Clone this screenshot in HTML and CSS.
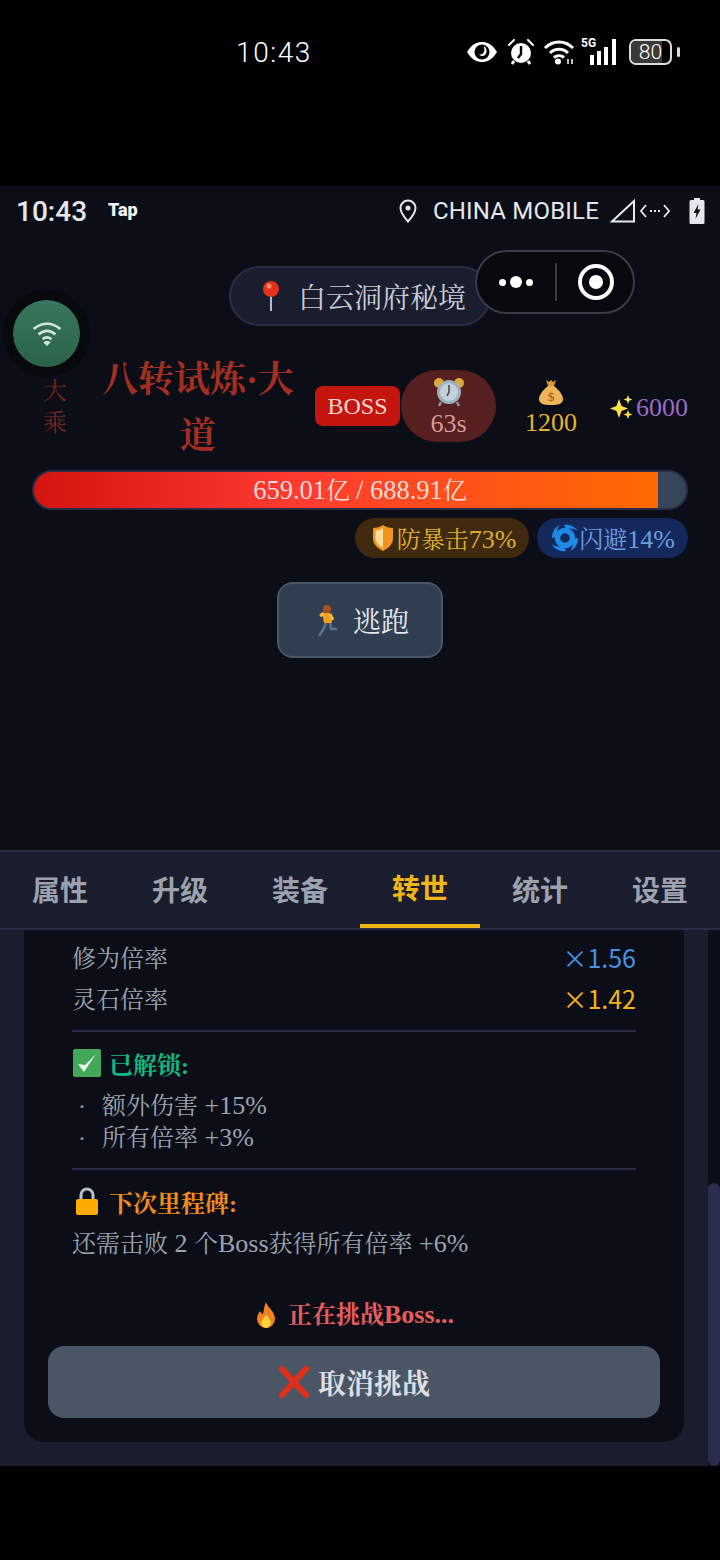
FILE: index.html
```html
<!DOCTYPE html>
<html lang="zh-CN">
<head>
  <meta charset="UTF-8" />
  <meta name="viewport" content="width=device-width, initial-scale=1.0"/>
  <title>白云洞府秘境</title>
  <link rel="stylesheet" href="styles.css">
</head>
<body>
  <!-- outer phone status bar -->
  <div class="phone-bar">
    <span class="phone-time">10:43</span>
    <div class="phone-icons">
      <svg width="32" height="24" viewBox="0 0 32 24"><path d="M1 12C6 4 11 2 16 2s10 2 15 10c-5 8-10 10-15 10S6 20 1 12z" fill="#fff"/><circle cx="16" cy="12" r="7.5" fill="#000"/><path d="M18 6a6 6 0 0 1 1 9c-2 2-5 1-6-1 2 1 4 0 5-2s0-4 0-6z" fill="#fff"/></svg>
      <svg class="ic-alarm" width="28" height="26" viewBox="0 0 28 26"><path d="M2 6l5-5M26 6l-5-5" stroke="#fff" stroke-width="2" stroke-linecap="round"/><circle cx="14" cy="14" r="10" fill="#fff"/><path d="M14 7v8l-3 4" stroke="#000" stroke-width="2.4" fill="none"/><path d="M7 22l-2 3M21 22l2 3" stroke="#fff" stroke-width="3"/></svg>
      <svg class="ic-wifi" width="32" height="26" viewBox="0 0 32 26"><path d="M2 9c8-8 20-8 28 0M7 14c5-5 13-5 18 0M11 18.500c3-2.500 7-2.500 10 0" stroke="#fff" stroke-width="3" fill="none"/><circle cx="15" cy="22.500" r="3" fill="#fff"/><path d="M25 20v5M29 20v5" stroke="#fff" stroke-width="1.500"/></svg>
      <div class="signal">
        <span class="five-g">5G</span>
        <svg width="40" height="26" viewBox="0 0 40 26"><path d="M11 16v10M18 12v14M25 8v18M33 0v26" stroke="#fff" stroke-width="4"/></svg>
      </div>
      <div class="battery"><span class="battery-fill"></span><span class="battery-num">80</span></div>
      <span class="battery-cap"></span>
    </div>
  </div>

  <div class="app">
    <div class="status-bar">
      <span class="status-time">10:43</span>
      <span class="status-tap">Tap</span>
      <div class="status-right">
        <svg width="18" height="24" viewBox="0 0 18 24"><path d="M9 1.500a7.500 7.500 0 0 0-7.500 7.500c0 5 7.500 13.500 7.500 13.500S16.500 14 16.500 9A7.500 7.500 0 0 0 9 1.500z" fill="none" stroke="#e5e7eb" stroke-width="2"/><circle cx="9" cy="9" r="2.500" fill="#e5e7eb"/></svg>
        <span class="carrier">CHINA MOBILE</span>
        <svg class="ic-triangle" width="26" height="24" viewBox="0 0 26 24"><path d="M2 22.500L24 2v20.500z" fill="none" stroke="#e5e7eb" stroke-width="2"/></svg>
        <svg class="ic-data" width="30" height="16" viewBox="0 0 30 16"><path d="M6 2L1 8l5 6M24 2l5 6-5 6" fill="none" stroke="#e5e7eb" stroke-width="1.800"/><path d="M10 8h2M14 8h2M18 8h2" stroke="#e5e7eb" stroke-width="2"/></svg>
        <svg class="ic-battery" width="16" height="26" viewBox="0 0 16 26"><path d="M5 0h6v2h3a1.500 1.500 0 0 1 1.500 1.500v21A1.500 1.500 0 0 1 14 26H2a1.500 1.500 0 0 1-1.500-1.500v-21A1.500 1.500 0 0 1 2 2h3z" fill="#e5e7eb"/><path d="M9.500 6L4.500 15h3l-1 6 5-9.500h-3z" fill="#0b0e17"/></svg>
      </div>
    </div>

    <div class="capsule">
      <div class="capsule-dots"><i></i><b></b><i></i></div>
      <span class="capsule-line"></span>
      <span class="capsule-target"><i></i></span>
    </div>

    <div class="float-wifi">
      <svg width="32" height="27" viewBox="0 0 36 30"><path d="M3 10c9-8 21-8 30 0M8.500 16c6-5 13-5 19 0M13 21.500c3-2.500 7-2.500 10 0" fill="none" stroke="#d3e6dc" stroke-width="3"/><path d="M18 29l-4-4c2-2 6-2 8 0z" fill="#d3e6dc"/></svg>
    </div>

    <main class="battle">
      <div class="location">
        <svg width="20" height="32" viewBox="0 0 20 32"><rect x="9" y="12" width="2" height="19" fill="#b8bcc4"/><circle cx="10" cy="9" r="8" fill="#e5331b"/><circle cx="8" cy="6" r="2.500" fill="#ff8a6a"/></svg>
        <span>白云洞府秘境</span>
      </div>

      <div class="boss-row">
        <div class="realm">大乘</div>
        <div class="boss-name">八转试炼·大道</div>
        <span class="boss-tag">BOSS</span>
        <div class="timer">
          <svg width="32" height="30" viewBox="0 0 32 30"><circle cx="6" cy="6" r="5" fill="#e0a83c"/><circle cx="26" cy="6" r="5" fill="#e0a83c"/><path d="M8 25l-2 4M24 25l2 4" stroke="#8b98a5" stroke-width="2.500"/><circle cx="16" cy="15" r="12" fill="#9fb0bd"/><circle cx="16" cy="15" r="9" fill="#c5d0d8"/><path d="M16 8v7l-2 4" stroke="#39424d" stroke-width="1.500" fill="none"/></svg>
          <span>63s</span>
        </div>
        <div class="gold">
          <svg width="26" height="28" viewBox="0 0 26 28"><path d="M8 2l3 2 2-2 2 2 3-2-2 6H10z" fill="#d99a3c"/><path d="M10 8h6c5 4 9 9 9 13 0 5-5 6-12 6S1 26 1 21c0-4 4-9 9-13z" fill="#efb45c"/><text x="13" y="23" class="bag-mark">$</text></svg>
          <span>1200</span>
        </div>
        <div class="spirit">
          <svg width="24" height="26" viewBox="0 0 24 26"><path d="M9 4l2.500 7L18 13.500 11.500 16 9 23l-2.500-7L0 13.500 6.500 11z" fill="#fbe04a"/><path d="M18 0l1.200 3.300L22.500 4.500l-3.300 1.200L18 9l-1.200-3.300L13.500 4.500l3.300-1.200z" fill="#f6dc6c"/><path d="M18 15l1.300 3.200L22.500 19.500l-3.200 1.300L18 24l-1.300-3.200-3.200-1.300 3.200-1.300z" fill="#f8d93c"/></svg>
          <span>6000</span>
        </div>
      </div>

      <div class="hp-bar">
        <div class="hp-fill" style="width: 95.7%"></div>
        <span class="hp-text"><span class="num">659.01</span>亿 <span class="num">/ 688.91</span>亿</span>
      </div>

      <div class="chips">
        <span class="chip chip-crit">
          <svg width="28" height="28" viewBox="-3 0 28 28"><path d="M11 1c3 2 6 3 10 3v10c0 6-4 10-10 13C5 24 1 20 1 14V4c4 0 7-1 10-3z" fill="#f2951f"/><path d="M11 4C9 5.500 6 6.500 3.500 6.500V14c0 4.500 3 7.500 7.500 10z" fill="#fbdc9a"/></svg>
          <span class="chip-text">防暴击<span class="num">73%</span></span>
        </span>
        <span class="chip chip-dodge">
          <svg width="28" height="28" viewBox="0 0 28 28"><circle cx="14" cy="14" r="7.500" fill="none" stroke="#1f8ae6" stroke-width="5.500"/><path d="M13 1c6-1 11 2 14 6-4-3-8-3-12-2zM27 14c0 6-3 11-8 13 3-3 3-8 2-11zM15 27C9 28 3 25 1 20c4 3 8 3 12 2zM1 14C1 8 4 3 9 1 6 4 6 8 7 12z" fill="#1f8ae6"/></svg>
          <span class="chip-text">闪避<span class="num">14%</span></span>
        </span>
      </div>

      <button class="flee-btn">
        <svg width="26" height="34" viewBox="0 0 26 34"><circle cx="14" cy="6" r="4" fill="#a8521c"/><path d="M9 10h8l2 10h-8z" fill="#f7a01c"/><path d="M7 13l4-3M17 11l3 6" stroke="#f9b93c" stroke-width="3"/><path d="M13 20l-3 7-4 6M17 20l1 6h6" stroke="#5c7290" stroke-width="2.500" fill="none"/></svg>
        <span>逃跑</span>
      </button>
    </main>

    <nav class="tabs">
      <div class="tab">属性</div>
      <div class="tab">升级</div>
      <div class="tab">装备</div>
      <div class="tab active">转世</div>
      <div class="tab">统计</div>
      <div class="tab">设置</div>
    </nav>

    <section class="panel">
      <div class="card">
        <div class="stats">
          <div class="rate-row"><span>修为倍率</span><b class="rate-blue">×1.56</b></div>
          <div class="rate-row"><span>灵石倍率</span><b class="rate-gold">×1.42</b></div>
        </div>

        <div class="block">
          <div class="block-title title-green">
            <svg width="28" height="28" viewBox="0 0 28 28"><rect width="28" height="28" rx="2" fill="#43a85a"/><path d="M5 15l6 8L23 5 12 16z" fill="#eef6ee"/></svg>
            已解锁:
          </div>
          <div class="perk"><span class="dot">·</span>额外伤害<span class="num"> +15%</span></div>
          <div class="perk"><span class="dot">·</span>所有倍率<span class="num"> +3%</span></div>
        </div>

        <div class="block block-next">
          <div class="block-title title-orange">
            <svg width="24" height="28" viewBox="0 0 24 28"><path d="M6 13V8a6 6 0 0 1 12 0v5" fill="none" stroke="#b9bec6" stroke-width="3"/><rect x="1" y="12" width="22" height="16" rx="2" fill="#ffaa00"/></svg>
            下次里程碑:
          </div>
          <div class="next-text">还需击败<span class="num"> 2 </span>个<span class="num">Boss</span>获得所有倍率<span class="num"> +6%</span></div>
        </div>

        <div class="fight-state">
          <svg width="24" height="28" viewBox="0 0 24 28"><path d="M12 1c1 5 9 9 9 17a9 9 0 0 1-18 0c0-4 2-6 3-8 1 2 2 3 3 3 1-4 1-8 3-12z" fill="#f4811f"/><path d="M12 13c1 3 5 5 5 9a5 5 0 0 1-10 0c0-3 4-5 5-9z" fill="#ffd23c"/></svg>
          <span class="fight-text">正在挑战<span class="num">Boss...</span></span>
        </div>

        <button class="cancel-btn">
          <svg width="32" height="32" viewBox="0 0 32 32"><path d="M4 3l24 26M28 3L4 29" stroke="#e0301a" stroke-width="6" stroke-linecap="round"/></svg>
          <span>取消挑战</span>
        </button>
      </div>
      <span class="scroll-track"><i class="scroll-thumb"></i></span>
    </section>
  </div>
</body>
</html>
```

FILE: styles.css
```css
* {
  box-sizing: border-box;
}

body {
  margin: 0;
  width: 720px;
  height: 1560px;
  background: #000;
  font-family: "Liberation Serif", "Noto Serif CJK SC", serif;
  color: #9ca3af;
  overflow: hidden;
}

svg {
  display: block;
  flex: none;
}

button {
  font-family: inherit;
}

/* latin text runs a little larger than the CJK next to it */
.num {
  font-size: 26px;
}

/* outer phone bar */
.phone-bar {
  height: 186px;
  padding: 38px 40px 0 236px;
  display: flex;
  justify-content: space-between;
  align-items: flex-start;
}

.phone-time {
  font-family: Roboto, sans-serif;
  font-weight: 300;
  font-size: 28px;
  line-height: 30px;
  letter-spacing: 1.600px;
  color: #fff;
}

.phone-icons {
  display: flex;
  align-items: center;
  height: 28px;
}

.ic-alarm {
  margin-left: 9px;
}

.ic-wifi {
  margin-left: 8px;
}

.signal {
  position: relative;
  width: 40px;
  height: 26px;
  margin-left: 6px;
}

.five-g {
  position: absolute;
  left: 0;
  top: -3px;
  font-family: Roboto, sans-serif;
  font-size: 12px;
  font-weight: 700;
  color: #fff;
}

.battery {
  position: relative;
  width: 43px;
  height: 26px;
  margin-left: 8px;
  border: 2px solid #ddd;
  border-radius: 7px;
  overflow: hidden;
}

.battery-fill {
  display: block;
  width: 80%;
  height: 100%;
  background: #3a3a3a;
}

.battery-num {
  position: absolute;
  inset: 0;
  text-align: center;
  font-family: Roboto, sans-serif;
  font-weight: 300;
  font-size: 21px;
  line-height: 22px;
  color: #fff;
}

.battery-cap {
  width: 3px;
  height: 10px;
  margin-left: 5px;
  background: #ddd;
  border-radius: 2px;
}

/* app */
.app {
  position: relative;
  height: 1280px;
  background: #0b0e17;
  display: flex;
  flex-direction: column;
}

.status-bar {
  flex: none;
  height: 50px;
  padding: 0 15px 0 16px;
  display: flex;
  align-items: center;
  font-family: Roboto, sans-serif;
  color: #e5e7eb;
}

.status-time {
  font-size: 28px;
  font-weight: 500;
}

.status-tap {
  margin-left: 21px;
  margin-top: -4px;
  font-size: 18px;
  font-weight: 900;
  color: #f2f2f2;
}

.status-right {
  margin-left: auto;
  display: flex;
  align-items: center;
}

.carrier {
  margin-left: 16px;
  font-size: 24px;
  letter-spacing: 0.200px;
}

.ic-triangle {
  margin-left: 11px;
}

.ic-data {
  margin-left: 4px;
}

.ic-battery {
  margin-left: 19px;
}

.capsule {
  position: absolute;
  left: 475px;
  top: 64px;
  width: 160px;
  height: 64px;
  background: #08090f;
  border: 2px solid #3a3c47;
  border-radius: 32px;
  display: flex;
  align-items: center;
  z-index: 2;
}

.capsule-dots {
  width: 78px;
  display: flex;
  justify-content: center;
  align-items: center;
  gap: 4px;
}

.capsule-dots i {
  width: 7px;
  height: 7px;
  border-radius: 50%;
  background: #fff;
}

.capsule-dots b {
  width: 12px;
  height: 12px;
  border-radius: 50%;
  background: #fff;
}

.capsule-line {
  width: 2px;
  height: 38px;
  background: #3a3c47;
}

.capsule-target {
  margin-left: 21px;
  width: 36px;
  height: 36px;
  border: 4px solid #fff;
  border-radius: 50%;
  display: flex;
  align-items: center;
  justify-content: center;
}

.capsule-target i {
  width: 14px;
  height: 14px;
  border-radius: 50%;
  background: #fff;
}

.float-wifi {
  position: absolute;
  left: 3px;
  top: 104px;
  width: 87px;
  height: 87px;
  background: #2f6f55;
  background-image: linear-gradient(#38775c, #2a6249);
  background-clip: padding-box;
  border: 10px solid #07090e;
  border-radius: 50%;
  display: flex;
  align-items: center;
  justify-content: center;
  z-index: 2;
}

.battle {
  flex: none;
  height: 614px;
  padding: 30px 32px 0;
  display: flex;
  flex-direction: column;
  align-items: center;
}

.location {
  flex: none;
  width: 262px;
  height: 60px;
  background: #1a1d2e;
  border: 2px solid #2a2d45;
  border-radius: 30px;
  display: flex;
  align-items: center;
  gap: 17px;
  padding-left: 30px;
  font-size: 28px;
  color: #c9ccd4;
  white-space: nowrap;
}

.boss-row {
  flex: none;
  align-self: stretch;
  height: 144px;
  padding-top: 16px;
  display: flex;
  align-items: center;
}

.realm {
  width: 24px;
  margin-left: 11px;
  margin-top: 2px;
  font-size: 24px;
  line-height: 32px;
  color: #722520;
}

.boss-name {
  width: 192px;
  margin-left: 35px;
  margin-top: 4px;
  font-size: 36px;
  line-height: 56px;
  font-weight: 700;
  text-align: center;
  color: #a32e22;
}

.boss-tag {
  margin-left: 21px;
  width: 85px;
  height: 40px;
  line-height: 40px;
  text-align: center;
  background: #c5150f;
  border-radius: 8px;
  font-size: 24px;
  color: #f3d6d2;
}

.timer {
  margin-left: 1px;
  width: 95px;
  height: 72px;
  border-radius: 36px;
  background: #55201f;
  display: flex;
  flex-direction: column;
  align-items: center;
  gap: 2px;
  padding-top: 7px;
  font-size: 26px;
  line-height: 30px;
  color: #d69a9a;
}

.gold {
  width: 110px;
  margin-top: 3px;
  display: flex;
  flex-direction: column;
  align-items: center;
  gap: 2px;
  font-size: 26px;
  line-height: 30px;
  color: #e6b32a;
}

.bag-mark {
  font-size: 13px;
  fill: #8a5a1c;
  text-anchor: middle;
}

.spirit {
  margin-left: 4px;
  margin-top: 3px;
  display: flex;
  align-items: center;
  gap: 2px;
  font-size: 26px;
  color: #9a6cc6;
}

.hp-bar {
  flex: none;
  position: relative;
  align-self: stretch;
  height: 40px;
  background: #374559;
  border: 2px solid #2a2d45;
  border-radius: 20px;
  overflow: hidden;
}

.hp-fill {
  height: 100%;
  background: linear-gradient(90deg, #d4140f 0%, #ff3b30 42%, #ff6a00 100%);
}

.hp-text {
  position: absolute;
  inset: 0;
  text-align: center;
  font-size: 24px;
  line-height: 37px;
  color: #f3dcd8;
  white-space: nowrap;
}

.hp-text .num {
  font-size: 26.500px;
}

.chips {
  flex: none;
  align-self: stretch;
  margin-top: 8px;
  display: flex;
  justify-content: flex-end;
  gap: 8px;
}

.chip {
  height: 40px;
  padding: 0 13px 0 14px;
  border-radius: 20px;
  display: flex;
  align-items: center;
  font-size: 24px;
  line-height: 30px;
  white-space: nowrap;
}

.chip-text {
  margin-top: 4px;
}

.chip-crit {
  background: #3f2a10;
  color: #dcae2e;
}

.chip-dodge {
  background: #14285c;
  color: #6d9ee0;
}

.flee-btn {
  flex: none;
  margin-top: 24px;
  width: 166px;
  height: 76px;
  background: #2f3e50;
  border: 2px solid #4a5568;
  border-radius: 16px;
  padding: 0 0 0 2px;
  display: flex;
  align-items: center;
  justify-content: center;
  gap: 14px;
  font-size: 28px;
  color: #e5e7eb;
}

.tabs {
  flex: none;
  height: 80px;
  background: #1a1d2e;
  border-top: 2px solid #2a2d45;
  border-bottom: 2px solid #2a2d45;
  display: flex;
}

.tab {
  width: 120px;
  height: 76px;
  text-align: center;
  font-size: 28px;
  font-weight: 700;
  line-height: 74px;
  color: #9ca3af;
  font-family: "Noto Sans CJK SC", sans-serif;
}

.tab.active {
  color: #f2b516;
  line-height: 70px;
  border-bottom: 4px solid #f2b516;
}

.panel {
  position: relative;
  flex: none;
  height: 536px;
  background: #1a1d2e;
  padding: 0 36px 24px 24px;
}

.card {
  height: 100%;
  background: #0b0e17;
  border-radius: 0 0 20px 20px;
  padding: 6px 48px 24px 48px;
  display: flex;
  flex-direction: column;
  font-size: 24px;
}

.stats {
  padding-bottom: 12px;
  border-bottom: 2px solid #2a2d45;
}

.rate-row {
  height: 41px;
  display: flex;
  justify-content: space-between;
  align-items: center;
  color: #9ca3af;
}

.rate-row b {
  font-family: "Noto Sans CJK SC", sans-serif;
  font-size: 25px;
  font-weight: 400;
}

.rate-blue {
  color: #4a90e2;
}

.rate-gold {
  color: #f2b516;
}

.block {
  padding: 11px 0 14px;
  border-bottom: 2px solid #2a2d45;
}

.block-next {
  padding-top: 11px;
  border-bottom: 0;
}

.block-title {
  height: 40px;
  display: flex;
  align-items: center;
  font-weight: 700;
}

.title-green {
  color: #10b981;
  gap: 8px;
  padding-left: 1px;
}

.title-orange {
  color: #f28c18;
  gap: 10px;
  padding-left: 3px;
}

.perk {
  height: 32px;
  line-height: 32px;
  color: #9ca3af;
}

.block .block-title + .perk {
  margin-top: 7px;
}

.dot {
  display: inline-block;
  width: 30px;
  padding-left: 6px;
}

.next-text {
  margin-top: 3px;
  height: 40px;
  line-height: 40px;
  color: #9ca3af;
  white-space: nowrap;
}

.fight-state {
  margin-top: 23px;
  height: 28px;
  display: flex;
  justify-content: center;
  align-items: center;
  gap: 10px;
  color: #e35d5d;
  font-weight: 700;
}

.fight-text {
  line-height: 24px;
}

.cancel-btn {
  margin: 17px -24px 0;
  height: 72px;
  flex: none;
  background: #4a5565;
  border: 0;
  border-radius: 16px;
  display: flex;
  align-items: center;
  justify-content: center;
  gap: 8px;
  font-size: 28px;
  font-weight: 700;
  color: #dcdee2;
}

.scroll-track {
  position: absolute;
  right: 0;
  top: 0;
  bottom: 0;
  width: 12px;
  background: #0b0e17;
  display: flex;
  align-items: flex-end;
}

.scroll-thumb {
  width: 12px;
  height: 283px;
  background: #2a2d50;
  border-radius: 6px;
}
```
